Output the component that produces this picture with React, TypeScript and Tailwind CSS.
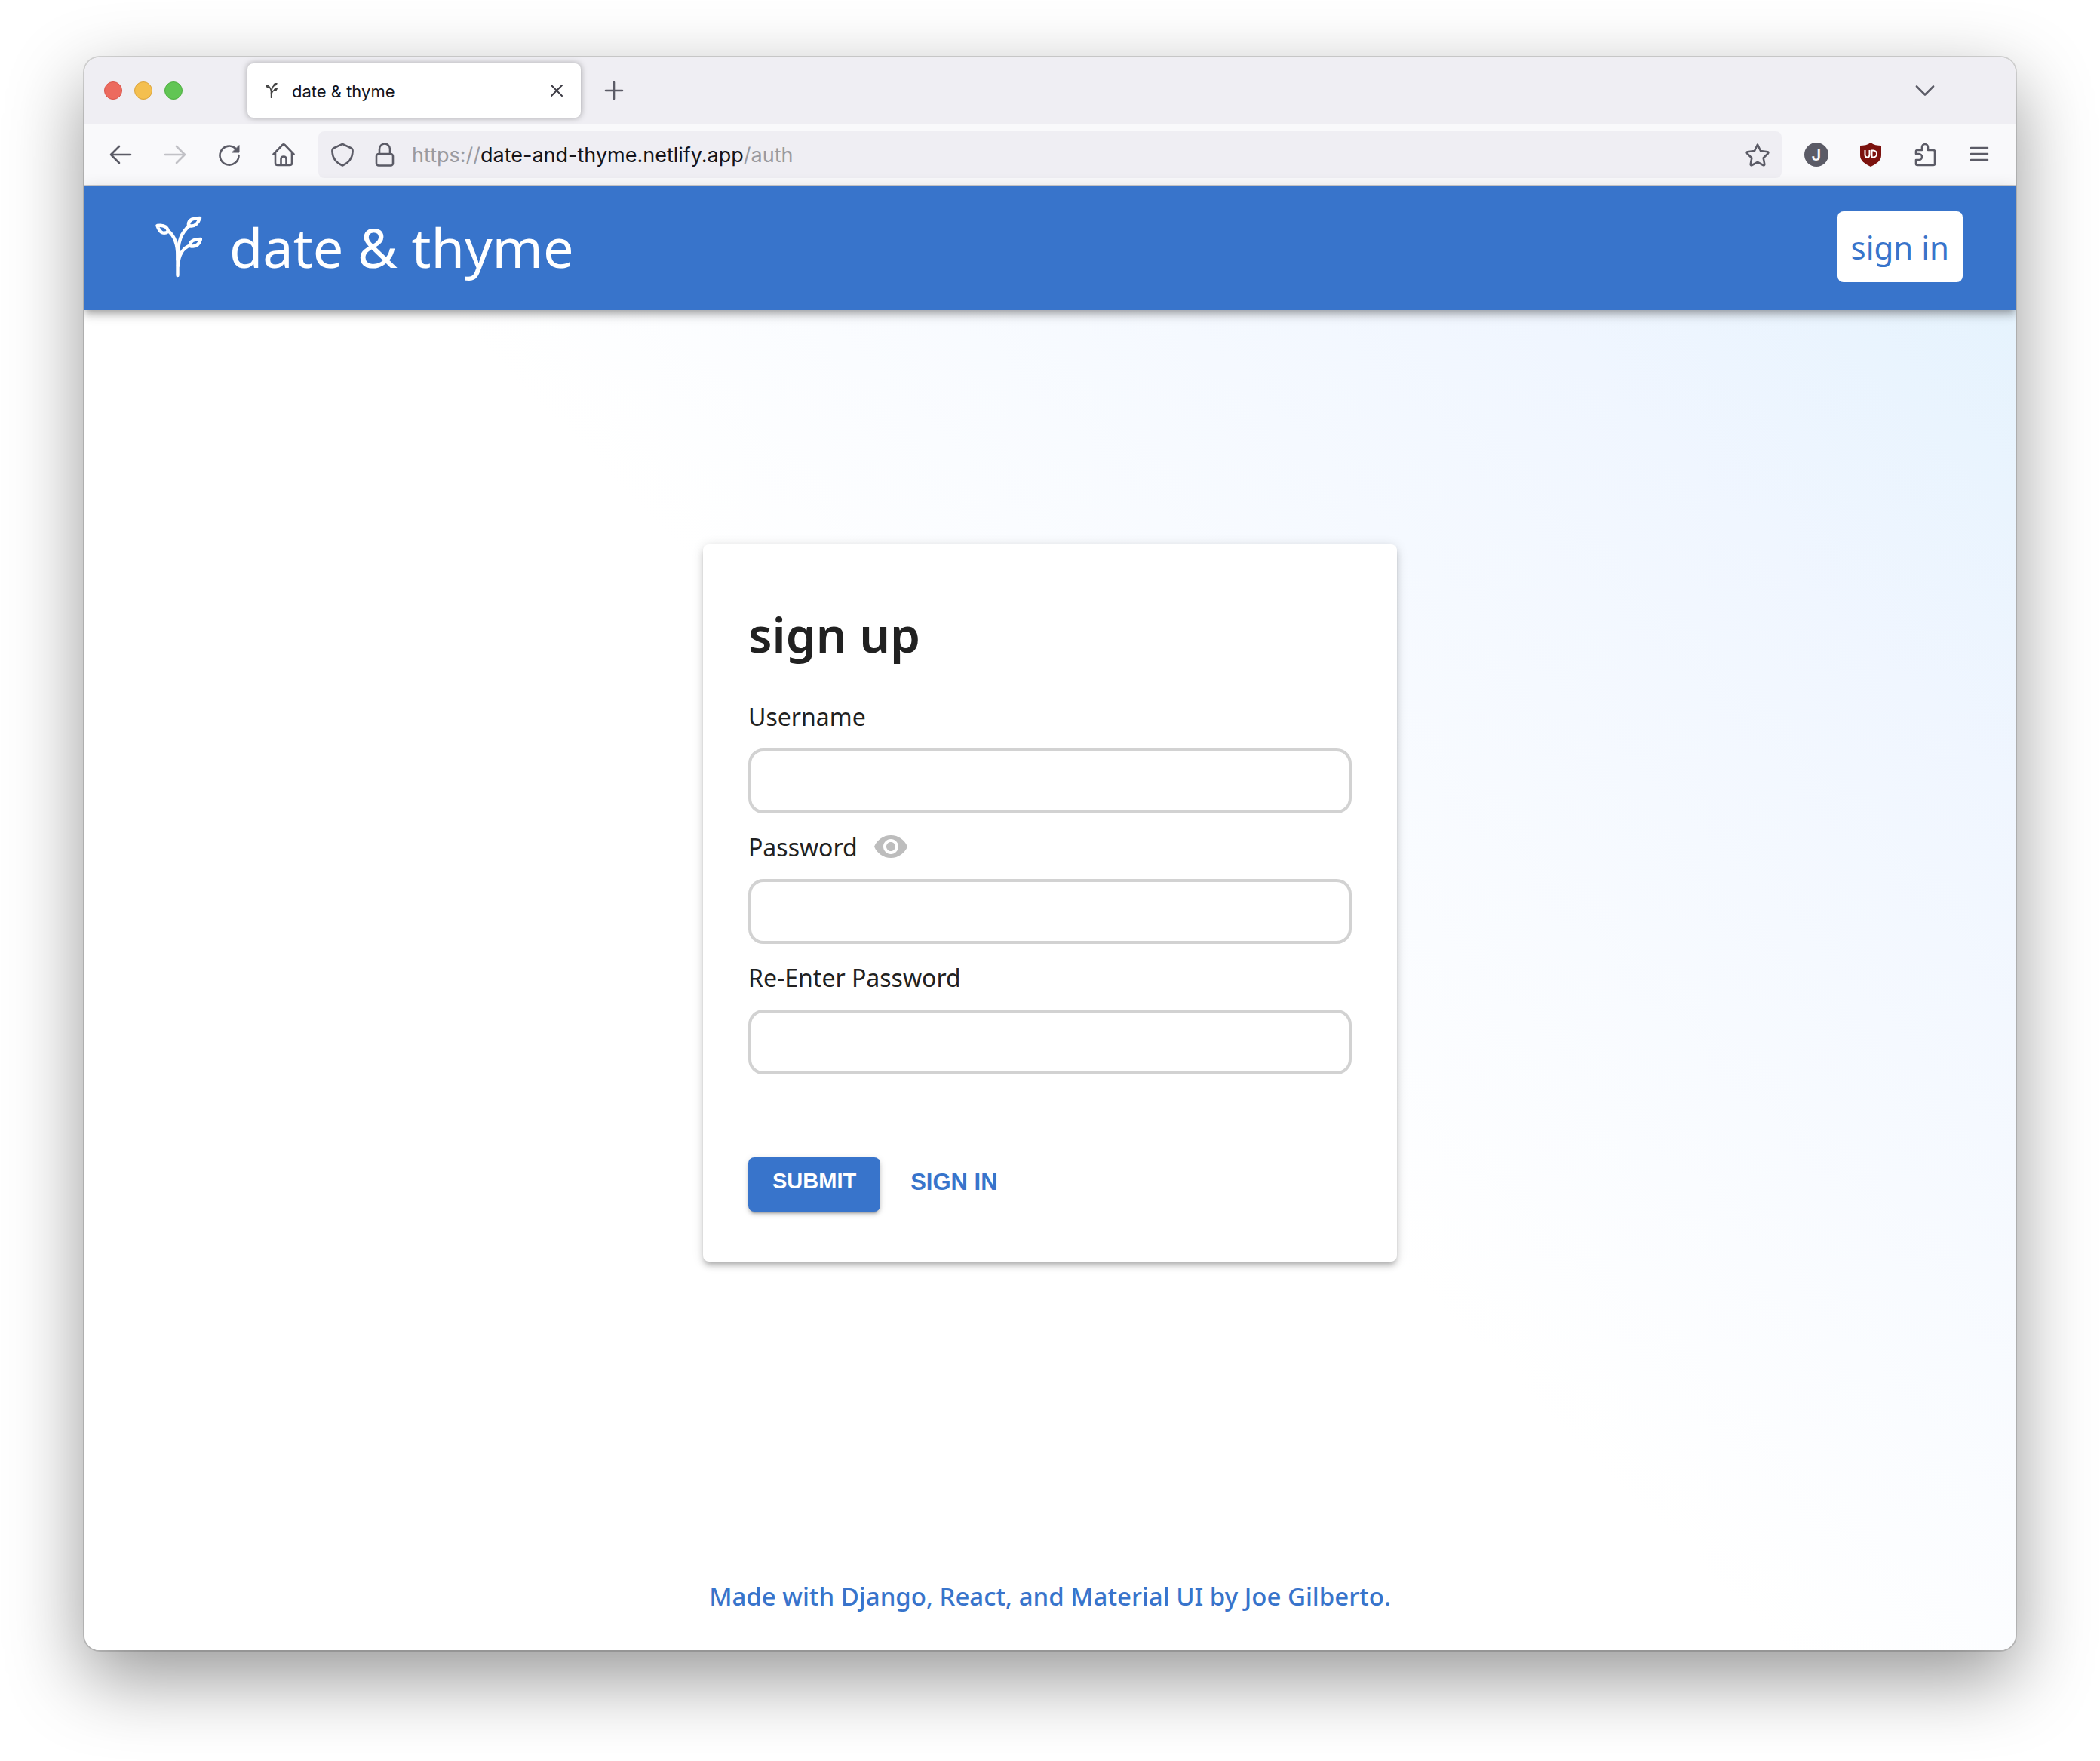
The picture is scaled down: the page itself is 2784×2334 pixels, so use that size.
import { useState } from 'react';
import type { ReactNode } from 'react';

const ui = 'font-["Inter","Liberation_Sans",sans-serif]';
const round = 'font-["Noto_Sans","Open_Sans",sans-serif]';

function Stroke({ children, className = 'size-8', width = 2.6 }: { children: ReactNode; className?: string; width?: number }) {
  return (
    <svg viewBox="0 0 32 32" className={className} fill="none" stroke="currentColor" strokeWidth={width} strokeLinecap="round" strokeLinejoin="round" aria-hidden="true">
      {children}
    </svg>
  );
}

function Sprig({ className, width }: { className: string; width: number }) {
  return (
    <svg viewBox="0 0 62 82" className={className} fill="none" stroke="currentColor" strokeWidth={width} strokeLinecap="round" strokeLinejoin="round" aria-hidden="true">
      <path d="M29.500 79V54C29.500 38 26 27 17 20" />
      <path d="M29.500 58C29.500 32 35 22 45 13" />
      <path d="M30 66C31 50 37 42 47 39" />
      <path d="M2.500 13C10 12 16 14 17 21C9 26 5 20 2.500 13Z" />
      <path d="M59 3C50 3 43 5 44 13C52 15 56 11 59 3Z" />
      <path d="M60 31C52 31 45 33 46 40C54 42 58 38 60 31Z" />
    </svg>
  );
}

function ToolButton({ label, children, disabled = false }: { label: string; children: ReactNode; disabled?: boolean }) {
  return (
    <button type="button" aria-label={label} disabled={disabled} className="flex h-16 w-[72px] items-center justify-center disabled:opacity-35">
      {children}
    </button>
  );
}

function TabStrip() {
  return (
    <div className="flex h-[88px] items-center bg-[#efeef3] pr-24 pl-[26px] text-[#5b5b66]">
      <div className="flex gap-4">
        <button type="button" aria-label="Close window" className="size-6 rounded-full border border-[#d9564c] bg-[#ec6a5e]" />
        <button type="button" aria-label="Minimize window" className="size-6 rounded-full border border-[#dba33b] bg-[#f4bf4f]" />
        <button type="button" aria-label="Zoom window" className="size-6 rounded-full border border-[#4eaf40] bg-[#61c554]" />
      </div>
      <div className="ml-[86px] flex h-[72px] w-[442px] items-center rounded-lg bg-white px-6 text-[#15141a] shadow-[0_0_8px_rgba(0,0,0,0.35)]">
        <Sprig className="h-5 w-4 text-[#444]" width={7} />
        <span className="ml-[19px] flex-1 pt-0.5 text-[22px]">date &amp; thyme</span>
        <button type="button" aria-label="Close tab">
          <svg viewBox="0 0 16 16" className="size-4" fill="none" stroke="#3c3b44" strokeWidth="2" strokeLinecap="round" aria-hidden="true">
            <path d="M1 1L15 15M15 1L1 15" />
          </svg>
        </button>
      </div>
      <button type="button" aria-label="New tab" className="ml-5 flex size-12 items-center justify-center">
        <Stroke><path d="M16 5V27M5 16H27" /></Stroke>
      </button>
      <button type="button" aria-label="List all tabs" className="ml-auto flex size-12 items-center justify-center">
        <Stroke><path d="M5 10.500L16 21.500L27 10.500" /></Stroke>
      </button>
    </div>
  );
}

function Toolbar() {
  return (
    <div className="flex h-[83px] items-center gap-2.5 border-b-2 border-[#cccccf] bg-[#f9f9fb] px-3 text-[#5b5b66]">
      <nav aria-label="Browser" className="flex">
        <ToolButton label="Back"><Stroke><path d="M29 16H3M14 5L3 16L14 27" /></Stroke></ToolButton>
        <ToolButton label="Forward" disabled><Stroke><path d="M3 16H29M18 5L29 16L18 27" /></Stroke></ToolButton>
        <ToolButton label="Reload">
          <Stroke><path d="M28.500 17A12.500 12.500 0 1 1 24 7.500" /><path d="M29 4V13H20Z" fill="currentColor" strokeWidth="1" /></Stroke>
        </ToolButton>
        <ToolButton label="Home">
          <Stroke><path d="M2.500 15.500L14.500 3Q16 1.600 17.500 3L29.500 15.500M5 13.500V27Q5 30 8 30H24Q27 30 27 27V13.500M12.500 30V22Q12.500 18.500 16 18.500T19.500 22V30" /></Stroke>
        </ToolButton>
      </nav>
      <div className="flex h-[62px] flex-1 items-center rounded-lg bg-[#efeef3] px-4">
        <button type="button" aria-label="Tracking protection">
          <Stroke><path d="M16 1.800L28 7.500Q30 9 29.500 12.500C29 21 24 27 16 30.500C8 27 3 21 2.500 12.500Q2 9 4 7.500Z" /></Stroke>
        </button>
        <button type="button" aria-label="Connection secure" className="ml-6">
          <Stroke><rect x="5" y="15" width="22" height="15.500" rx="3" /><path d="M9 15V8.500A7 7 0 0 1 23 8.500V15" /></Stroke>
        </button>
        <div role="textbox" aria-label="Address" className="ml-5 flex-1 pt-1 text-[27px] text-[#9a9a9f]">
          https://<span className="text-[#15141a]">date-and-thyme.netlify.app</span>/auth
        </div>
        <button type="button" aria-label="Bookmark this page">
          <Stroke><path d="M16 2.500L20 11L29.500 12.300Q31 13 30 14.300L23.700 20.500L25.300 29Q25 30.600 23.500 30L16 26L8.500 30Q7 30.600 6.700 29L8.300 20.500L2 14.300Q1 13 2.500 12.300L12 11Z" /></Stroke>
        </button>
      </div>
      <div className="flex">
        <ToolButton label="Account">
          <span className="flex size-8 items-center justify-center rounded-full bg-[#5b5b66] text-[22px] leading-none font-semibold text-[#f9f9fb]">J</span>
        </ToolButton>
        <ToolButton label="uBlock Origin">
          <svg viewBox="0 0 32 32" className="size-8" fill="none" aria-hidden="true">
            <path d="M16 0C20 3 25 4 30 4V17C30 24 24 28 16 32C8 28 2 24 2 17V4C7 4 12 3 16 0Z" fill="#7c120e" />
            <path d="M8.500 10V16Q8.500 19.500 11.500 19.500T14.500 16V10M17.500 19.500V10.500H19.500A4.500 4.500 0 0 1 19.500 19.500Z" stroke="#fff" strokeWidth="2" />
          </svg>
        </ToolButton>
        <ToolButton label="Extensions">
          <Stroke><path d="M4 14V12Q4 10 6 10H12V6A4 4 0 0 1 20 6V10H27Q29 10 29 12V28Q29 30 27 30H6Q4 30 4 28V23H8A4 4 0 0 0 8 15H4Z" /></Stroke>
        </ToolButton>
        <ToolButton label="Open application menu">
          <Stroke><path d="M5 7H27M5 15H27M5 23H27" /></Stroke>
        </ToolButton>
      </div>
    </div>
  );
}

function Field({ id, label, type, children }: { id: string; label: string; type: string; children?: ReactNode }) {
  return (
    <div className="flex flex-col gap-5">
      <div className="flex h-[45px] items-center gap-5">
        <label htmlFor={id} className="text-[32px] leading-[45px]">{label}</label>
        {children}
      </div>
      <input id={id} type={type} className="h-[86px] w-full rounded-[20px] border-4 border-[#d2d2d2] bg-white px-5 text-[32px] outline-none" />
    </div>
  );
}

function SignUpCard() {
  const [visible, setVisible] = useState(false);
  const type = visible ? 'text' : 'password';
  return (
    <form
      onSubmit={(e) => e.preventDefault()}
      className="w-full max-w-[920px] rounded-lg bg-white px-[60px] pt-[78px] pb-[66px] text-[#212121] shadow-[0_6px_6px_-4px_rgba(0,0,0,0.2),0_6px_8px_rgba(0,0,0,0.14),0_2px_16px_rgba(0,0,0,0.12)]"
    >
      <h1 className="mb-11 text-[64px] leading-[84px] font-semibold">sign up</h1>
      <div className="flex flex-col gap-[22px]">
        <Field id="username" label="Username" type="text" />
        <Field id="password" label="Password" type={type}>
          <button type="button" aria-label="Show password" onClick={() => setVisible(!visible)}>
            <svg viewBox="0 0 24 24" className="size-12" fill="#bdbdbd" aria-hidden="true">
              <path d="M12 4.500C7 4.500 2.730 7.610 1 12c1.730 4.390 6 7.500 11 7.500s9.270-3.110 11-7.500c-1.730-4.390-6-7.500-11-7.500zM12 17c-2.760 0-5-2.240-5-5s2.240-5 5-5 5 2.240 5 5-2.240 5-5 5zm0-8c-1.660 0-3 1.340-3 3s1.340 3 3 3 3-1.340 3-3-1.340-3-3-3z" />
            </svg>
          </button>
        </Field>
        <Field id="password-again" label="Re-Enter Password" type={type} />
      </div>
      <div className='mt-[110px] flex items-center gap-10 font-["Liberation_Sans",Arial,sans-serif] font-bold'>
        <button type="submit" className="h-[72px] rounded-lg bg-[#3874cb] px-8 pb-2 text-[29px] text-white shadow-[0_6px_2px_-4px_rgba(0,0,0,0.2),0_4px_4px_rgba(0,0,0,0.14),0_2px_10px_rgba(0,0,0,0.12)]">
          SUBMIT
        </button>
        <a href="#sign-in" className="pb-1 text-[31px] text-[#3874cb]">SIGN IN</a>
      </div>
    </form>
  );
}

export default function App() {
  return (
    <div className={`flex min-h-screen bg-white px-28 pt-[76px] pb-[147px] ${ui}`}>
      <div className="flex flex-1 flex-col overflow-hidden rounded-[20px] shadow-[0_0_0_2px_rgba(0,0,0,0.14),0_36px_100px_rgba(0,0,0,0.42)]">
        <TabStrip />
        <Toolbar />
        <div className={`flex flex-1 flex-col bg-[linear-gradient(45deg,#ffffff_50%,#f0f6ff_82%,#e3f2fd_100%)] ${round}`}>
          <header className="flex h-[164px] items-center justify-between bg-[#3874cb] pr-[70px] pb-1 pl-[94px] text-white shadow-[0_4px_8px_-2px_rgba(0,0,0,0.2),0_8px_10px_rgba(0,0,0,0.14),0_2px_20px_rgba(0,0,0,0.12)]">
            <a href="#home" className="flex items-center gap-9 text-[72px] leading-[98px]">
              <Sprig className="h-[82px] w-[62px]" width={4.4} />
              date &amp; thyme
            </a>
            <a href="#sign-in" className="flex h-[94px] items-center rounded-lg bg-white px-[18px] text-[42px] text-[#3874cb]">sign in</a>
          </header>
          <main className="flex flex-1 items-center justify-center">
            <SignUpCard />
          </main>
          <footer className="pt-28 pb-12 text-center text-[33px] leading-[46px] font-medium text-[#3874cb]">
            Made with Django, React, and Material UI by Joe Gilberto.
          </footer>
        </div>
      </div>
    </div>
  );
}
